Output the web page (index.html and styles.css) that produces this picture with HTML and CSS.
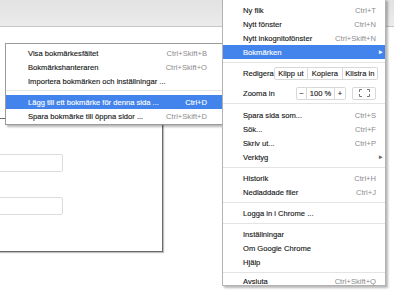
FILE: index.html
```html
<!DOCTYPE html>
<html>
  <head>
    <meta charset="UTF-8">
    <link rel="stylesheet" href="styles.css">
  </head>
  <body>
    <div class="verktygsfalt"></div>
    <div class="sida">
      <div class="dialog">
        <div class="falt"></div>
        <div class="falt"></div>
      </div>
    </div>

    <!-- undermeny for bokmarken -->
    <div class="meny undermeny">
      <div class="rad"><span class="etikett">Visa bokmärkesfältet</span><span class="genvag">Ctrl+Skift+B</span></div>
      <div class="rad"><span class="etikett">Bokmärkshanteraren</span><span class="genvag">Ctrl+Skift+O</span></div>
      <div class="rad"><span class="etikett">Importera bokmärken och inställningar ...</span></div>
      <div class="linje"></div>
      <div class="rad vald"><span class="etikett">Lägg till ett bokmärke för denna sida ...</span><span class="genvag">Ctrl+D</span></div>
      <div class="rad"><span class="etikett">Spara bokmärke till öppna sidor ...</span><span class="genvag">Ctrl+Skift+D</span></div>
    </div>

    <!-- huvudmenyn -->
    <div class="meny huvudmeny">
      <div class="rad"><span class="etikett">Ny flik</span><span class="genvag">Ctrl+T</span></div>
      <div class="rad"><span class="etikett">Nytt fönster</span><span class="genvag">Ctrl+N</span></div>
      <div class="rad"><span class="etikett">Nytt inkognitofönster</span><span class="genvag">Ctrl+Skift+N</span></div>
      <div class="rad vald"><span class="etikett">Bokmärken</span><span class="pil">&#9656;</span></div>
      <div class="linje tatt-under"></div>
      <div class="kontrollrad">
        <span class="etikett">Redigera</span>
        <div class="knappgrupp">
          <span class="knapp bred">Klipp ut</span>
          <span class="knapp bred">Kopiera</span>
          <span class="knapp bred">Klistra in</span>
        </div>
      </div>
      <div class="kontrollrad">
        <span class="etikett">Zooma in</span>
        <div class="knappgrupp">
          <span class="knapp smal">&minus;</span>
          <span class="knapp procent">100 %</span>
          <span class="knapp smal">+</span>
        </div>
        <div class="knappgrupp helskarm">
          <span class="knapp ikon">
            <svg width="11" height="8" viewBox="0 0 11 8">
              <path d="M0.5 3V0.5H3M8 0.5H10.5V3M10.5 5V7.5H8M3 7.5H0.5V5" fill="none" stroke="#777" stroke-width="1"/>
            </svg>
          </span>
        </div>
      </div>
      <div class="linje tatt-over"></div>
      <div class="rad"><span class="etikett">Spara sida som...</span><span class="genvag">Ctrl+S</span></div>
      <div class="rad"><span class="etikett">Sök...</span><span class="genvag">Ctrl+F</span></div>
      <div class="rad"><span class="etikett">Skriv ut...</span><span class="genvag">Ctrl+P</span></div>
      <div class="rad"><span class="etikett">Verktyg</span><span class="pil gra">&#9656;</span></div>
      <div class="linje"></div>
      <div class="rad"><span class="etikett">Historik</span><span class="genvag">Ctrl+H</span></div>
      <div class="rad"><span class="etikett">Nedladdade filer</span><span class="genvag">Ctrl+J</span></div>
      <div class="linje"></div>
      <div class="rad"><span class="etikett">Logga in i Chrome ...</span></div>
      <div class="linje"></div>
      <div class="rad"><span class="etikett">Inställningar</span></div>
      <div class="rad"><span class="etikett">Om Google Chrome</span></div>
      <div class="rad"><span class="etikett">Hjälp</span></div>
      <div class="linje sista"></div>
      <div class="rad kort"><span class="etikett">Avsluta</span><span class="genvag">Ctrl+Skift+Q</span></div>
    </div>
  </body>
</html>
```

FILE: styles.css
```css
html{background-color: white;}
body{
  margin: 0;
  width: 394px;
  height: 298px;
  overflow: hidden;
  position: relative;
  font-family: "Liberation Sans", Arial, sans-serif;
  font-size: 7.6px;
  color: #151515;
  -webkit-text-stroke: 0.12px;
}
.verktygsfalt{
  height: 26px;
  background: linear-gradient(#e2e2e2, #ebebeb);
  border-bottom: 1px solid #c6c6c6;
}
.sida{
  overflow: visible;
}
.dialog{
  box-sizing: border-box;
  margin-top: 91px;
  margin-left: -40px;
  width: 203px;
  height: 134px;
  border: 1px solid #6a6a6a;
  box-shadow: 1px 1px 1px rgba(0,0,0,0.25);
  padding-top: 35px;
}
.falt{
  box-sizing: border-box;
  width: 102px;
  height: 18px;
  border: 1px solid #dcdcdc;
  border-radius: 2px;
  margin-bottom: 25px;
}

/* menyerna */
.meny{
  position: absolute;
  box-sizing: border-box;
  background: white;
  border: 1px solid #a9a9a9;
  box-shadow: 2px 2px 2px rgba(0,0,0,0.28);
}
.rad{
  display: flex;
  align-items: center;
  height: 14px;
  white-space: nowrap;
}
.rad .etikett{
  flex: 1;
}
.genvag{
  color: #8c8c8c;
  -webkit-text-stroke: 0;
}
.rad.vald{
  background: #4284ec;
  color: white;
}
.rad.vald .genvag{
  color: white;
  -webkit-text-stroke: 0.12px;
}
.linje{
  height: 1px;
  background: #e4e4e4;
  margin: 3px 0;
}
.linje.tatt-under{margin-bottom: 0;}
.linje.tatt-over{margin-top: 0; margin-bottom: 4px;}
.linje.sista{margin-bottom: 2px;}
.rad.kort{height: 12px;}

.undermeny{
  left: 5px;
  top: 43px;
  width: 218px;
  height: 82px;
  padding-top: 2px;
  border-color: #9b9b9b;
}
.undermeny .rad{
  padding: 0 15px 0 22px;
}
.undermeny .linje{
  margin: 2px 0 4px 0;
}

.huvudmeny{
  left: 222px;
  top: -1px;
  width: 164px;
  height: 287px;
  padding-top: 3px;
  border-color: #b3b3b3;
}
.huvudmeny .rad,
.huvudmeny .kontrollrad{
  padding: 0 9px 0 20px;
}
.pil{
  font-size: 7px;
  margin-right: -7px;
  color: white;
}
.pil.gra{
  color: #666;
}
.kontrollrad{
  display: flex;
  align-items: center;
  height: 20px;
  white-space: nowrap;
}
.kontrollrad .etikett{
  flex: 1;
}
.knappgrupp{
  display: flex;
  height: 13px;
}
.knapp{
  box-sizing: border-box;
  display: flex;
  align-items: center;
  justify-content: center;
  height: 13px;
  border: 1px solid #d8d8d8;
  border-left: none;
  background: white;
}
.knapp:first-child{
  border-left: 1px solid #d8d8d8;
  border-radius: 2px 0 0 2px;
}
.knapp:last-child{
  border-radius: 0 2px 2px 0;
}
.knapp.bred{width: 35px;}
.knapp.bred:first-child{width: 34px;}
.knapp.smal{width: 11px;}
.knapp.smal:first-child{width: 11px;}
.knapp.procent{width: 28px;}
.helskarm{
  margin-left: 6px;
}
.knapp.ikon{
  width: 24px;
  border-radius: 2px;
}
```
